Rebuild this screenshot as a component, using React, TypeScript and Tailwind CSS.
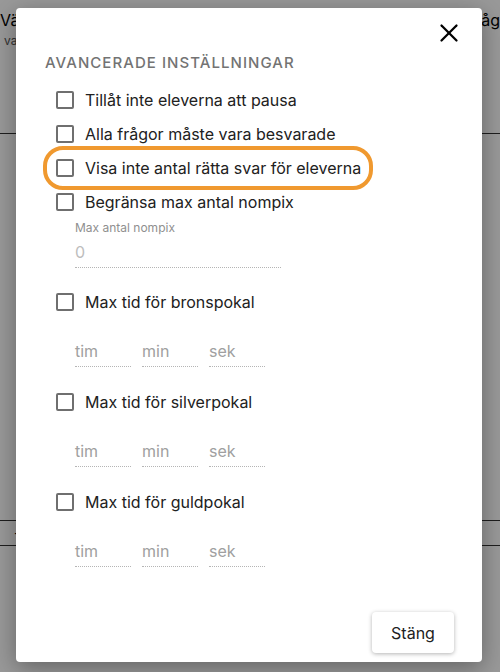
import { X } from 'lucide-react';

function Box({ label }: { label: string }) {
  return (
    <label className="flex items-center h-[34px] gap-[11px] text-[16px] text-[#212121]">
      <span className="w-[18px] h-[18px] rounded-[2px] border-2 border-[#6f6f6f] bg-white" />
      <span>{label}</span>
    </label>
  );
}

function TimeRow() {
  return (
    <div className="flex gap-[11px] pl-[19px] pt-[20px] pb-[18px]">
      {['tim', 'min', 'sek'].map((p) => (
        <div key={p} className="w-[56px] border-b border-dotted border-[#b5b5b5] pb-[3px] text-[16px] text-[#a0a0a0]">
          {p}
        </div>
      ))}
    </div>
  );
}

export default function App() {
  return (
    <div className="relative w-[500px] h-[672px] overflow-hidden bg-white" style={{ fontFamily: 'Inter, "Noto Sans", sans-serif' }}>
      {/* page behind the dialog */}
      <div className="h-[134px] border-b border-[#333] pt-[8px]">
        <div className="flex justify-between text-[16px] text-black">
          <span>Väl</span>
          <span>råg</span>
        </div>
        <div className="pl-[4px] text-[12px] text-[#555]">va</div>
      </div>
      <div className="h-[386px]" />
      <div className="h-[26px] border-y border-[#333] pl-[14px] text-[14px] leading-[24px]">-</div>

      <div className="absolute inset-0 bg-black/40" />

      {/* dialog */}
      <div className="absolute left-[16px] top-[8px] w-[466px] h-[654px] bg-white rounded-[4px] shadow-[0_6px_24px_rgba(0,0,0,0.35)]">
        <button className="absolute right-[18px] top-[10px] text-black">
          <X size={30} strokeWidth={1.8} />
        </button>

        <div className="pl-[29px] pt-[44px] text-[15px] font-medium tracking-[0.07em] text-[#737373]">
          AVANCERADE INSTÄLLNINGAR
        </div>

        <div className="pl-[40px] pt-[8px]">
          <Box label="Tillåt inte eleverna att pausa" />
          <Box label="Alla frågor måste vara besvarade" />
          <div className="relative">
            <Box label="Visa inte antal rätta svar för eleverna" />
            <div className="absolute -left-[13px] top-[-5px] w-[330px] h-[44px] rounded-[20px] border-[4px] border-[#f0992f]" />
          </div>
          <Box label="Begränsa max antal nompix" />

          <div className="pl-[19px] pt-[1px] pb-[17px]">
            <div className="text-[12px] text-[#8f8f8f] leading-[16px]">Max antal nompix</div>
            <div className="w-[206px] border-b border-dotted border-[#b5b5b5] pt-[4px] pb-[3px] text-[16px] text-[#bdbdbd]">0</div>
          </div>

          <Box label="Max tid för bronspokal" />
          <TimeRow />
          <Box label="Max tid för silverpokal" />
          <TimeRow />
          <Box label="Max tid för guldpokal" />
          <TimeRow />
        </div>

        <button className="absolute right-[28px] bottom-[9px] w-[82px] h-[41px] rounded-[4px] bg-white text-[16px] text-[#212121] shadow-[0_1px_4px_rgba(0,0,0,0.3)]">
          Stäng
        </button>
      </div>
    </div>
  );
}
